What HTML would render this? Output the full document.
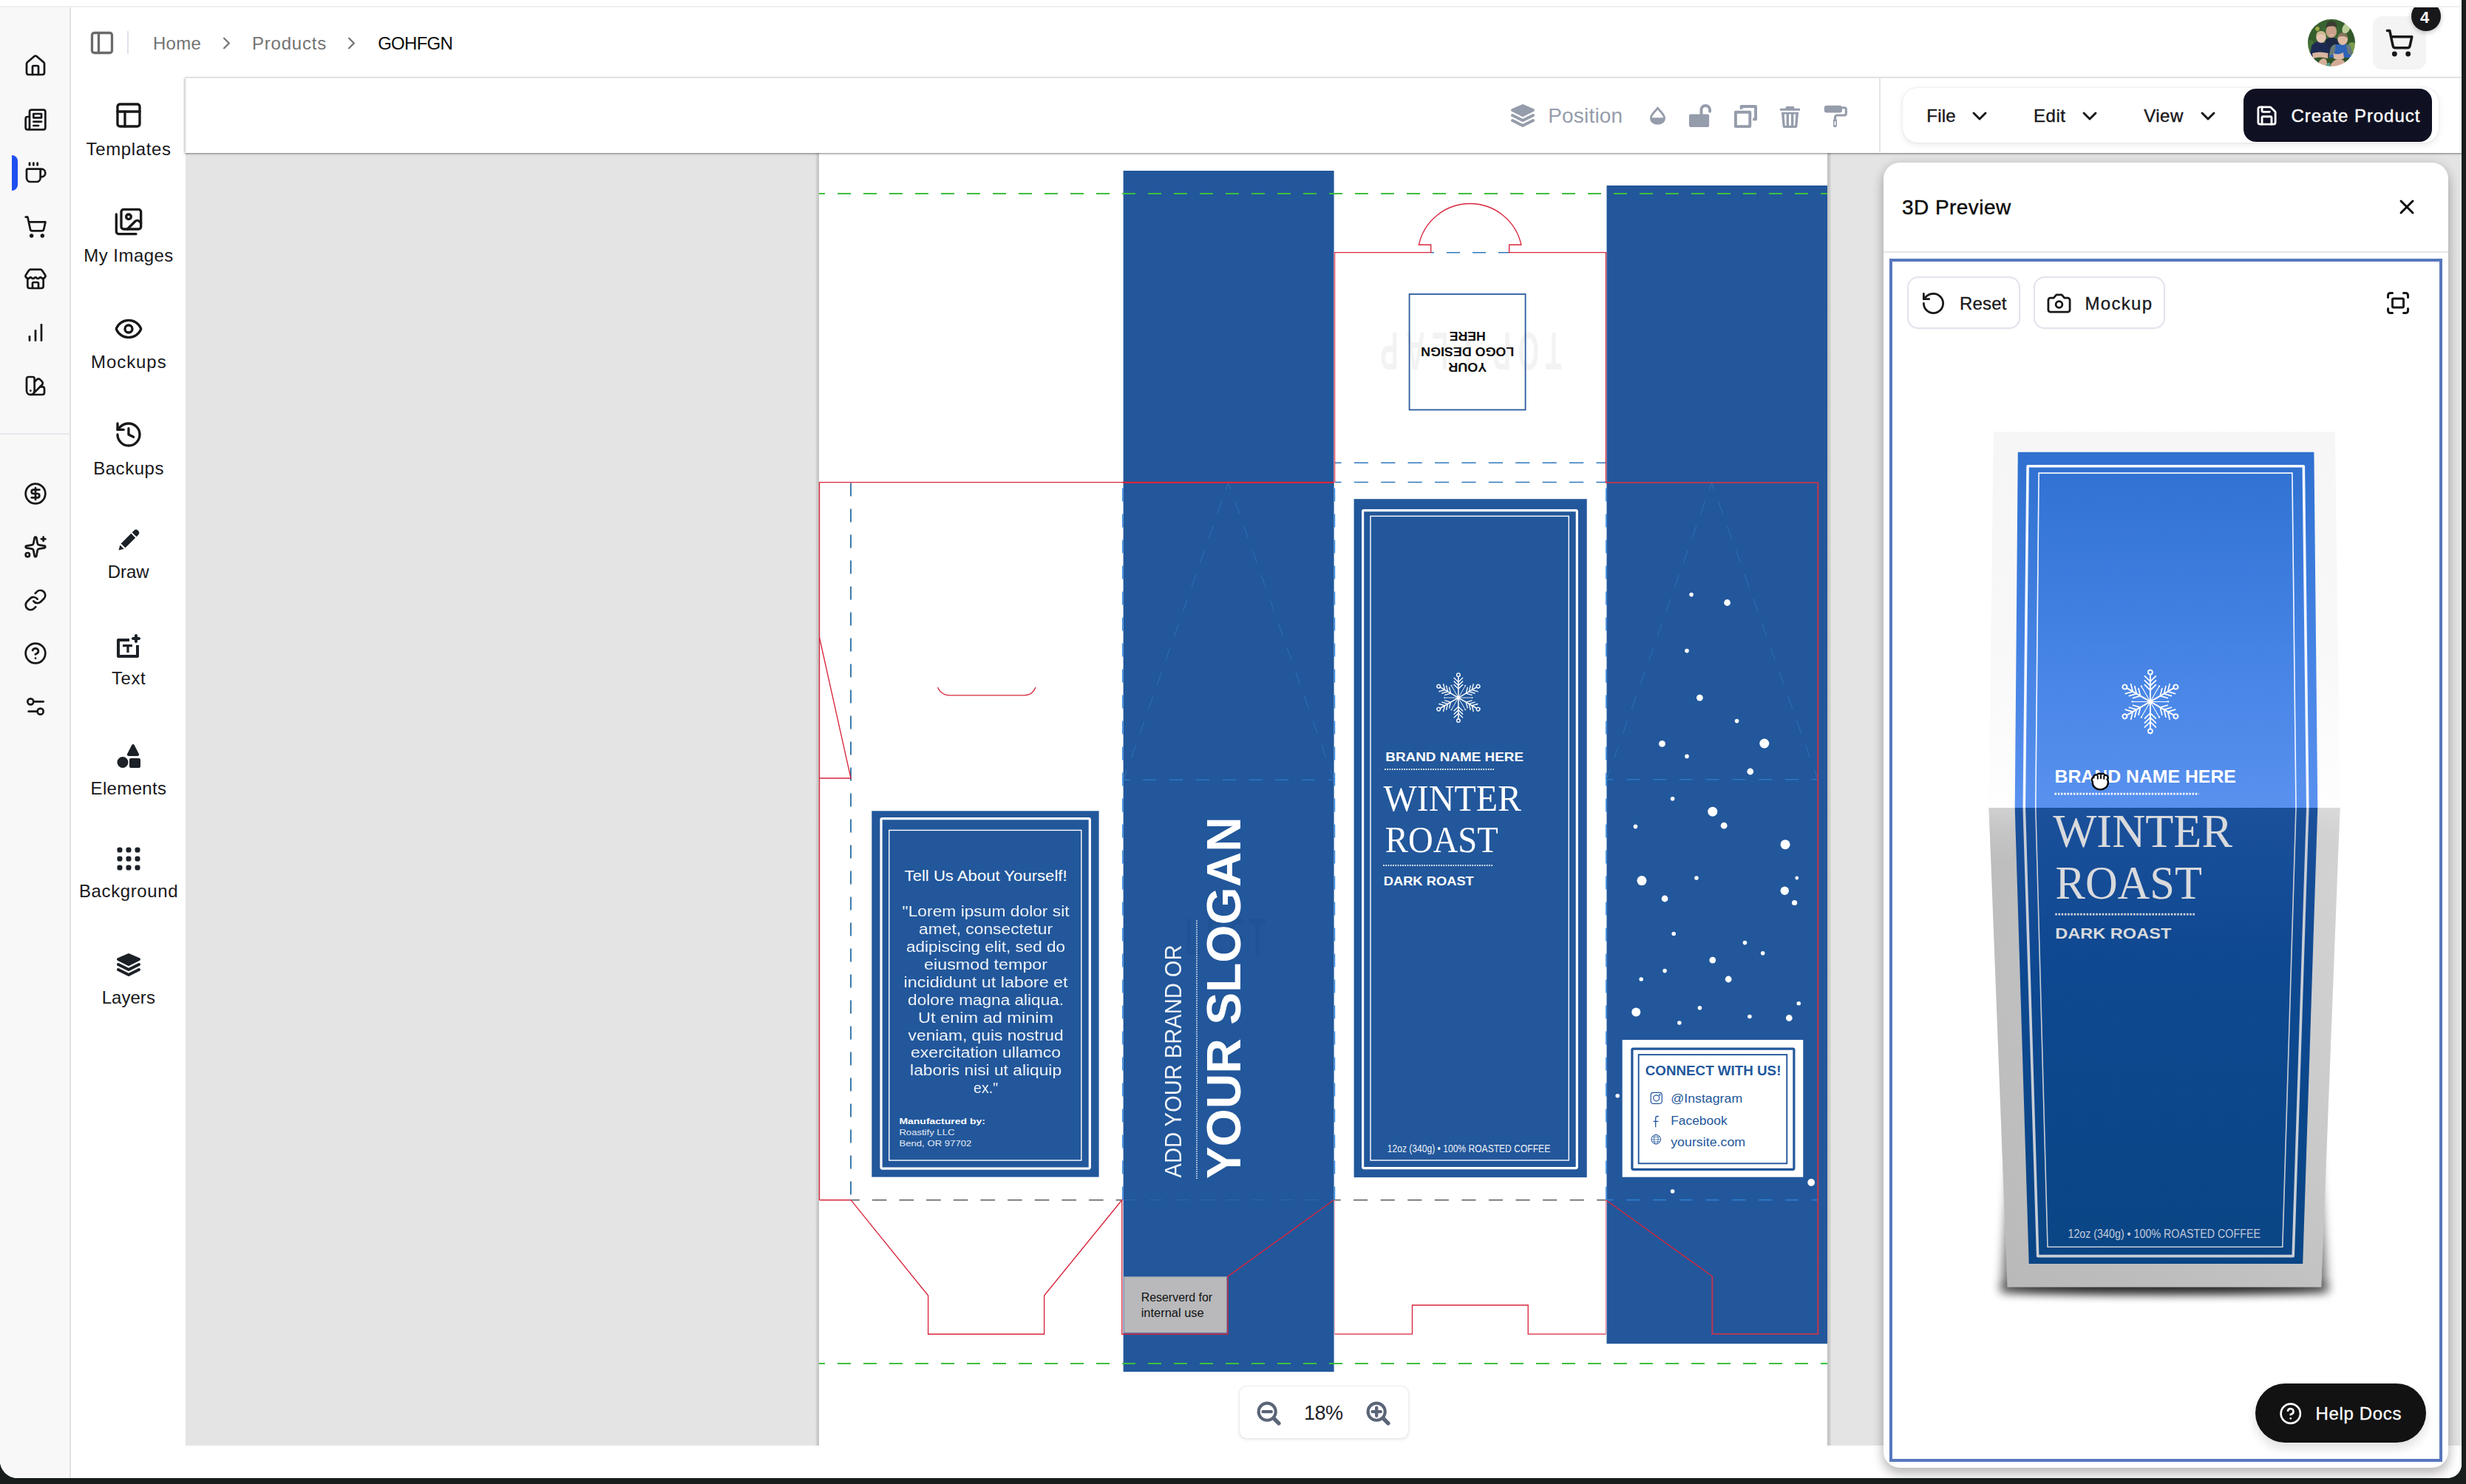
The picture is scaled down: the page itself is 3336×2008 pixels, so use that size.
<!DOCTYPE html>
<html lang="en"><head><meta charset="utf-8"><title>GOHFGN – Product Designer</title>
<style>
*{box-sizing:border-box;margin:0;padding:0}
html,body{width:3336px;height:2008px;overflow:hidden;background:#191e1d}
body{font-family:"Liberation Sans",sans-serif;color:#18181b;position:relative}
.abs,.ic,.t{position:absolute}
.ic{display:block;overflow:visible}
.t{white-space:nowrap;line-height:1}
#win{position:absolute;left:0;top:0;width:3330px;height:2000px;background:#fff;border-radius:0 0 19px 24px;overflow:hidden}
#app{position:absolute;left:0;top:10px;width:3330px;height:1990px;overflow:hidden;background:#fff}
</style></head><body>
<div id="win">
<div class="abs" style="left:0;top:8px;width:3330px;height:2px;background:#efeff0"></div>
<div id="app">

<div class="abs" style="left:0;top:0;width:96px;height:1990px;background:#f8f8f8;border-right:2px solid #e1e1e4"></div>
<svg class="ic" style="left:32.3px;top:62.9px;width:32px;height:32px" viewBox="0 0 24 24" fill="none" stroke="#18181b" stroke-width="2.05" stroke-linecap="round" stroke-linejoin="round" ><path d="M15 21v-8a1 1 0 0 0-1-1h-4a1 1 0 0 0-1 1v8"/><path d="M3 10a2 2 0 0 1 .709-1.528l7-5.999a2 2 0 0 1 2.582 0l7 5.999A2 2 0 0 1 21 10v9a2 2 0 0 1-2 2H5a2 2 0 0 1-2-2z"/></svg>
<svg class="ic" style="left:32.3px;top:135.6px;width:32px;height:32px" viewBox="0 0 24 24" fill="none" stroke="#18181b" stroke-width="2.05" stroke-linecap="round" stroke-linejoin="round" ><path d="M4 22h16a2 2 0 0 0 2-2V4a2 2 0 0 0-2-2H8a2 2 0 0 0-2 2v16a2 2 0 0 1-2 2Zm0 0a2 2 0 0 1-2-2v-9c0-1.1.9-2 2-2h2"/><path d="M18 14h-8"/><path d="M15 18h-5"/><path d="M10 6h8v4h-8V6Z"/></svg>
<svg class="ic" style="left:32.3px;top:207.6px;width:32px;height:32px" viewBox="0 0 24 24" fill="none" stroke="#18181b" stroke-width="2.05" stroke-linecap="round" stroke-linejoin="round" ><path d="M10 2v2"/><path d="M14 2v2"/><path d="M16 8a1 1 0 0 1 1 1v8a4 4 0 0 1-4 4H7a4 4 0 0 1-4-4V9a1 1 0 0 1 1-1h14a4 4 0 1 1 0 8h-1"/><path d="M6 2v2"/></svg>
<svg class="ic" style="left:32.3px;top:281.0px;width:32px;height:32px" viewBox="0 0 24 24" fill="none" stroke="#18181b" stroke-width="2.05" stroke-linecap="round" stroke-linejoin="round" ><circle cx="8" cy="21" r="1"/><circle cx="19" cy="21" r="1"/><path d="M2.05 2.05h2l2.66 12.42a2 2 0 0 0 2 1.58h9.78a2 2 0 0 0 1.95-1.57l1.65-7.43H5.12"/></svg>
<svg class="ic" style="left:32.3px;top:352.0px;width:32px;height:32px" viewBox="0 0 24 24" fill="none" stroke="#18181b" stroke-width="2.05" stroke-linecap="round" stroke-linejoin="round" ><path d="M15 21v-5a1 1 0 0 0-1-1h-4a1 1 0 0 0-1 1v5"/><path d="M17.774 10.31a1.12 1.12 0 0 0-1.549 0 2.5 2.5 0 0 1-3.451 0 1.12 1.12 0 0 0-1.548 0 2.5 2.5 0 0 1-3.452 0 1.12 1.12 0 0 0-1.549 0 2.5 2.5 0 0 1-3.77-3.248l2.889-4.184A2 2 0 0 1 7 2h10a2 2 0 0 1 1.653.873l2.895 4.192a2.5 2.5 0 0 1-3.774 3.244"/><path d="M4 10.950V19a2 2 0 0 0 2 2h12a2 2 0 0 0 2-2v-8.050"/></svg>
<svg class="ic" style="left:32.3px;top:424.0px;width:32px;height:32px" viewBox="0 0 24 24" fill="none" stroke="#18181b" stroke-width="2.05" stroke-linecap="round" stroke-linejoin="round" ><line x1="12" x2="12" y1="20" y2="10"/><line x1="18" x2="18" y1="20" y2="4"/><line x1="6" x2="6" y1="20" y2="16"/></svg>
<svg class="ic" style="left:32.3px;top:496.3px;width:32px;height:32px" viewBox="0 0 24 24" fill="none" stroke="#18181b" stroke-width="2.05" stroke-linecap="round" stroke-linejoin="round" ><path d="M11 17a4 4 0 0 1-8 0V5a2 2 0 0 1 2-2h4a2 2 0 0 1 2 2Z"/><path d="M16.7 13H19a2 2 0 0 1 2 2v4a2 2 0 0 1-2 2H7"/><path d="M 7 17h.01"/><path d="m11 8 2.3-2.3a2.4 2.4 0 0 1 3.404.004L18.6 7.6a2.4 2.4 0 0 1 .026 3.434L9.9 19.8"/></svg>
<div class="abs" style="left:16px;top:200px;width:8px;height:48px;background:#1f4ff0;border-radius:0 8px 8px 0"></div>
<div class="abs" style="left:0;top:576px;width:94px;height:2px;background:#e6e6ee"></div>
<svg class="ic" style="left:32.0px;top:641.8px;width:32px;height:32px" viewBox="0 0 24 24" fill="none" stroke="#18181b" stroke-width="2.05" stroke-linecap="round" stroke-linejoin="round" ><circle cx="12" cy="12" r="10"/><path d="M16 8h-6a2 2 0 1 0 0 4h4a2 2 0 1 1 0 4H8"/><path d="M12 18V6"/></svg>
<svg class="ic" style="left:32.0px;top:714.0px;width:32px;height:32px" viewBox="0 0 24 24" fill="none" stroke="#18181b" stroke-width="2.05" stroke-linecap="round" stroke-linejoin="round" ><path d="M11.017 2.814a1 1 0 0 1 1.966 0l1.051 5.558a2 2 0 0 0 1.594 1.594l5.558 1.051a1 1 0 0 1 0 1.966l-5.558 1.051a2 2 0 0 0-1.594 1.594l-1.051 5.558a1 1 0 0 1-1.966 0l-1.051-5.558a2 2 0 0 0-1.594-1.594l-5.558-1.051a1 1 0 0 1 0-1.966l5.558-1.051a2 2 0 0 0 1.594-1.594z"/><path d="M20 2v4"/><path d="M22 4h-4"/><circle cx="4" cy="20" r="2"/></svg>
<svg class="ic" style="left:32.0px;top:786.0px;width:32px;height:32px" viewBox="0 0 24 24" fill="none" stroke="#18181b" stroke-width="2.05" stroke-linecap="round" stroke-linejoin="round" ><path d="M10 13a5 5 0 0 0 7.54.54l3-3a5 5 0 0 0-7.07-7.07l-1.72 1.71"/><path d="M14 11a5 5 0 0 0-7.54-.54l-3 3a5 5 0 0 0 7.07 7.07l1.71-1.71"/></svg>
<svg class="ic" style="left:32.0px;top:857.8px;width:32px;height:32px" viewBox="0 0 24 24" fill="none" stroke="#18181b" stroke-width="2.05" stroke-linecap="round" stroke-linejoin="round" ><circle cx="12" cy="12" r="10"/><path d="M9.09 9a3 3 0 0 1 5.83 1c0 2-3 3-3 3"/><path d="M12 17h.01"/></svg>
<svg class="ic" style="left:32.0px;top:930.0px;width:32px;height:32px" viewBox="0 0 24 24" fill="none" stroke="#18181b" stroke-width="2.05" stroke-linecap="round" stroke-linejoin="round" ><path d="M20 7h-9"/><path d="M14 17H5"/><circle cx="17" cy="17" r="3"/><circle cx="7" cy="7" r="3"/></svg>
<div class="abs" style="left:250px;top:94px;width:3080px;height:2px;background:#e6e6e6"></div>
<svg class="ic" style="left:120.0px;top:29.7px;width:36px;height:36px" viewBox="0 0 24 24" fill="none" stroke="#6a6a6a" stroke-width="2.2" stroke-linecap="round" stroke-linejoin="round" ><rect width="18" height="18" x="3" y="3" rx="2"/><path d="M9 3v18"/></svg>
<div class="abs" style="left:172px;top:32px;width:2px;height:31px;background:#e1e1ec"></div>
<div class="t" style="left:207.00px;top:36.6px;font-size:24px;line-height:24px;color:#737373;font-weight:400;letter-spacing:0.267px;">Home</div>
<svg class="ic" style="left:293.3px;top:34.7px;width:27px;height:27px" viewBox="0 0 24 24" fill="none" stroke="#737373" stroke-width="2" stroke-linecap="round" stroke-linejoin="round" ><path d="m9 18 6-6-6-6"/></svg>
<div class="t" style="left:340.90px;top:36.6px;font-size:24px;line-height:24px;color:#737373;font-weight:400;letter-spacing:0.821px;">Products</div>
<svg class="ic" style="left:462.1px;top:34.7px;width:27px;height:27px" viewBox="0 0 24 24" fill="none" stroke="#737373" stroke-width="2" stroke-linecap="round" stroke-linejoin="round" ><path d="m9 18 6-6-6-6"/></svg>
<div class="t" style="left:511.20px;top:36.6px;font-size:24px;line-height:24px;color:#0a0a0a;font-weight:400;letter-spacing:-0.735px;">GOHFGN</div>
<svg class="ic" style="left:3122px;top:16px;width:64px;height:64px" viewBox="0 0 64 64">
<defs><clipPath id="avc"><circle cx="32" cy="32" r="32"/></clipPath>
<filter id="avb" x="-10%" y="-10%" width="120%" height="120%"><feGaussianBlur stdDeviation=".7"/></filter>
<radialGradient id="avbg" cx="45%" cy="30%" r="75%"><stop offset="0" stop-color="#3f6b34"/><stop offset="1" stop-color="#274a23"/></radialGradient></defs>
<g clip-path="url(#avc)"><g filter="url(#avb)">
<rect x="-4" y="-4" width="72" height="72" fill="url(#avbg)"/>
<ellipse cx="52" cy="12" rx="5" ry="8" fill="#d5e3ae" opacity=".85" transform="rotate(25 52 12)"/>
<ellipse cx="13" cy="13" rx="2.800" ry="3" fill="#b9b94e" opacity=".8"/>
<ellipse cx="60" cy="38" rx="6" ry="7" fill="#8cab5a" opacity=".8"/>
<ellipse cx="4" cy="36" rx="5" ry="8" fill="#4c7a3c" opacity=".7"/>
<path d="M22 44L24 28Q32 21 41 28L44 46Z" fill="#1b2844"/>
<ellipse cx="31.800" cy="16.500" rx="7.300" ry="8.800" fill="#c9a088"/>
<path d="M24 11.500Q25 2 32 2.200Q39.500 2.500 39.500 11Q32 7.500 24 11.500Z" fill="#3b3d33"/>
<path d="M28.500 20.500Q32 23.500 35.500 20.500Q32 22 28.500 20.500Z" fill="#f3e6dc"/>
<path d="M3 50L5 36Q10 29 18 31L27 34L30 50Z" fill="#1a2a52"/>
<ellipse cx="18" cy="24.300" rx="6.700" ry="7.600" fill="#e6c6b3"/>
<path d="M11.300 22Q12 15.500 18 16Q24.500 16.500 24.700 22.500Q18 18.500 11.300 22Z" fill="#cdbb93"/>
<path d="M29 52L31 40Q33 34 40 34L54 34Q58 36 59 42L60 52Z" fill="#2f63b6"/>
<path d="M29 50L30.500 40Q32.500 34.500 38 34L36 46Z" fill="#6b7a79"/><path d="M60 50L58.500 41Q57 35 52 34L54 46Z" fill="#6b7a79"/>
<ellipse cx="47.200" cy="27" rx="6.900" ry="7.900" fill="#dfbba5"/>
<path d="M40.300 25Q40.800 18 47 18.300Q53.800 18.600 54.100 25.500Q47 21 40.300 25Z" fill="#85745b"/>
<path d="M6 46Q16 43 27.500 46L27 53Q16 50 7 53Z" fill="#d9b49f"/>
<path d="M34.500 46Q41 49 48 45L49 53Q41 57 35 53Z" fill="#dbb7a6"/>
<path d="M13 64Q15 53 22 53Q27 54 26 64Z" fill="#d4ae98"/><path d="M30 64Q34 53 44 54Q52 55 50 64Z" fill="#d2ab95"/>
<path d="M24 64Q26 58 30 59L31 64Z" fill="#5a9a8a"/>
</g></g></svg>
<div class="abs" style="left:3210px;top:12px;width:72px;height:72px;border-radius:13px;background:#f4f4f5"></div>
<svg class="ic" style="left:3226.3px;top:27.5px;width:40px;height:40px" viewBox="0 0 24 24" fill="none" stroke="#18181b" stroke-width="2.1" stroke-linecap="round" stroke-linejoin="round" ><circle cx="8" cy="21" r="1"/><circle cx="19" cy="21" r="1"/><path d="M2.05 2.05h2l2.66 12.42a2 2 0 0 0 2 1.58h9.78a2 2 0 0 0 1.95-1.57l1.65-7.43H5.12"/></svg>
<div class="abs" style="left:3262px;top:-8.5px;width:40px;height:40px;border-radius:20px;background:#18181b;box-shadow:0 2px 6px rgba(0,0,0,.25)"></div>
<div class="t" style="left:3280px;top:3.3px;font-size:22px;line-height:22px;color:#fff;font-weight:700;letter-spacing:0px;transform:translateX(-50%);">4</div>
<div class="abs" style="left:98px;top:96px;width:152px;height:1894px;background:#fff"></div>
<svg class="ic" style="left:153.8px;top:125.8px;width:40px;height:40px" viewBox="0 0 24 24" fill="none" stroke="#18181b" stroke-width="2" stroke-linecap="round" stroke-linejoin="round" ><rect width="18" height="18" x="3" y="3" rx="2"/><path d="M3 9h18"/><path d="M9 21V9"/></svg>
<div class="t" style="left:116.50px;top:180.0px;font-size:24px;line-height:24px;color:#18181b;font-weight:400;letter-spacing:0.653px;">Templates</div>
<svg class="ic" style="left:153.8px;top:269.8px;width:40px;height:40px" viewBox="0 0 24 24" fill="none" stroke="#18181b" stroke-width="2" stroke-linecap="round" stroke-linejoin="round" ><path d="M18 22H4a2 2 0 0 1-2-2V6"/><path d="m22 13-1.296-1.296a2.41 2.41 0 0 0-3.408 0L11 18"/><circle cx="12" cy="8" r="2"/><rect width="16" height="16" x="6" y="2" rx="2"/></svg>
<div class="t" style="left:113.30px;top:324.0px;font-size:24px;line-height:24px;color:#18181b;font-weight:400;letter-spacing:0.453px;">My Images</div>
<svg class="ic" style="left:153.8px;top:414.7px;width:40px;height:40px" viewBox="0 0 24 24" fill="none" stroke="#18181b" stroke-width="2" stroke-linecap="round" stroke-linejoin="round" ><path d="M2.062 12.348a1 1 0 0 1 0-.696 10.75 10.75 0 0 1 19.876 0 1 1 0 0 1 0 .696 10.75 10.75 0 0 1-19.876 0"/><circle cx="12" cy="12" r="3"/></svg>
<div class="t" style="left:123.00px;top:468.0px;font-size:24px;line-height:24px;color:#18181b;font-weight:400;letter-spacing:0.933px;">Mockups</div>
<svg class="ic" style="left:153.8px;top:557.5px;width:40px;height:40px" viewBox="0 0 24 24" fill="none" stroke="#18181b" stroke-width="2" stroke-linecap="round" stroke-linejoin="round" ><path d="M3 12a9 9 0 1 0 9-9 9.75 9.75 0 0 0-6.74 2.74L3 8"/><path d="M3 3v5h5"/><path d="M12 7v5l4 2"/></svg>
<div class="t" style="left:126.20px;top:611.8px;font-size:24px;line-height:24px;color:#18181b;font-weight:400;letter-spacing:0.533px;">Backups</div>
<svg class="ic" style="left:158.8px;top:705.9px;width:30px;height:30px" viewBox="0 0 16 16" fill="#1c2127" fill-rule="evenodd"><path d="M14.9 1.1a2.2 2.2 0 0 0-3.1 0L10.5 2.4l3.1 3.1 1.3-1.300a2.200 2.200 0 0 0 0-3.100zM9.800 3.100L2.500 10.400l3.100 3.100 7.300-7.300-3.100-3.100zM1.800 11.400L.8 15.200l3.800-1-2.800-2.800z"/></svg>
<div class="t" style="left:145.85px;top:752.2px;font-size:24px;line-height:24px;color:#18181b;font-weight:400;letter-spacing:-0.075px;">Draw</div>
<svg class="ic" style="left:157.8px;top:848.0px;width:32px;height:32px" viewBox="0 0 16 16" fill="#1c2127" fill-rule="evenodd"><path d="M13 0c.55 0 1 .45 1 1v1h1c.55 0 1 .45 1 1s-.45 1-1 1h-1v1c0 .55-.45 1-1 1s-1-.45-1-1V4h-1c-.55 0-1-.45-1-1s.45-1 1-1h1V1c0-.55.45-1 1-1zM1 3h7.500v2H2v9h11V7.500h2V15c0 .55-.45 1-1 1H1c-.55 0-1-.45-1-1V4c0-.55.450-1 1-1zm3 4h6.500v1.600H8.300V12.500H6.700V8.600H4V7z"/></svg>
<div class="t" style="left:151.05px;top:896.1px;font-size:24px;line-height:24px;color:#18181b;font-weight:400;letter-spacing:0.500px;">Text</div>
<svg class="ic" style="left:157.8px;top:997.2px;width:32px;height:32px" viewBox="0 0 16 16" fill="#1c2127" fill-rule="evenodd"><path d="M10.100.600a1 1 0 0 1 1.800 0l3 5.900A1 1 0 0 1 14 8H8a1 1 0 0 1-.9-1.500l3-5.900zM4 8.500a3.750 3.750 0 1 1 0 7.500 3.750 3.750 0 0 1 0-7.500zM9.500 9.500h5.500a1 1 0 0 1 1 1V15a1 1 0 0 1-1 1H9.500a1 1 0 0 1-1-1v-4.500a1 1 0 0 1 1-1z"/></svg>
<div class="t" style="left:122.55px;top:1045.4px;font-size:24px;line-height:24px;color:#18181b;font-weight:400;letter-spacing:0.357px;">Elements</div>
<svg class="ic" style="left:157.8px;top:1136.2px;width:32px;height:32px" viewBox="0 0 16 16" fill="#1c2127" fill-rule="evenodd"><rect x="0.25" y="0.25" width="3.5" height="3.5" rx="1.4"/><rect x="6.25" y="0.25" width="3.5" height="3.5" rx="1.4"/><rect x="12.25" y="0.25" width="3.5" height="3.5" rx="1.4"/><rect x="0.25" y="6.25" width="3.5" height="3.5" rx="1.4"/><rect x="6.25" y="6.25" width="3.5" height="3.5" rx="1.4"/><rect x="12.25" y="6.25" width="3.5" height="3.5" rx="1.4"/><rect x="0.25" y="12.25" width="3.5" height="3.5" rx="1.4"/><rect x="6.25" y="12.25" width="3.5" height="3.5" rx="1.4"/><rect x="12.25" y="12.25" width="3.5" height="3.5" rx="1.4"/></svg>
<div class="t" style="left:106.90px;top:1184.2px;font-size:24px;line-height:24px;color:#18181b;font-weight:400;letter-spacing:0.631px;">Background</div>
<svg class="ic" style="left:157.8px;top:1280.4px;width:32px;height:32px" viewBox="0 0 16 16" fill="#1c2127" fill-rule="evenodd"><path d="M.55 4.89l7 3.5c.14.07.29.11.45.11s.31-.04.45-.11l7-3.5a.998.998 0 0 0-.06-1.81L8.4.08a1.006 1.006 0 0 0-.79 0l-6.99 3a.992.992 0 0 0-.07 1.81zM15 10c-.16 0-.31.04-.45.11L8 13.38l-6.55-3.27A.997.997 0 0 0 0 11c0 .39.22.72.55.89l7 3.5c.14.07.29.11.45.11s.31-.04.45-.11l7-3.5c.33-.17.55-.5.55-.89 0-.55-.45-1-1-1zm0-3.5c-.16 0-.31.04-.45.11L8 9.88 1.450 6.610A.997.997 0 0 0 0 7.500c0 .39.22.72.55.89l7 3.5c.14.07.29.11.45.11s.31-.04.45-.11l7-3.5c.33-.17.55-.5.55-.89 0-.55-.45-1-1-1z"/></svg>
<div class="t" style="left:137.75px;top:1328.4px;font-size:24px;line-height:24px;color:#18181b;font-weight:400;letter-spacing:0.020px;">Layers</div>
<div class="abs" style="left:251px;top:196px;width:3079px;height:1750px;background:#e4e4e4"></div>
<svg class="ic" style="left:251px;top:197px;width:2296px;height:1749px;overflow:hidden" viewBox="251 207 2296 1749">
<defs><linearGradient id="shl" x1="0" x2="1"><stop offset="0" stop-color="#d9d9d9"/><stop offset="1" stop-color="#bdbdbd"/></linearGradient><linearGradient id="shr" x1="0" x2="1"><stop offset="0" stop-color="#bdbdbd"/><stop offset="1" stop-color="#d9d9d9"/></linearGradient></defs>
<rect x="1103.500" y="200" width="5" height="1760" fill="url(#shl)"/><rect x="2472" y="200" width="5" height="1760" fill="url(#shr)"/>
<rect x="1108" y="200" width="1364" height="1760" fill="#fff"/>
<rect x="1519.600" y="231" width="285" height="1625.200" fill="#22579b"/>
<rect x="2173.500" y="251" width="298.500" height="1567.200" fill="#22579b"/>
<rect x="1179.300" y="1097.300" width="307.300" height="495.300" fill="#22579b"/>
<rect x="1831.600" y="675.200" width="315.100" height="917.900" fill="#22579b"/>
<text font-family="'Liberation Sans',sans-serif" font-weight="700" font-size="70" fill="#1f5293" text-anchor="middle" style="letter-spacing:14px" transform="translate(1661 1292) scale(.5 1)" x="0" y="0" opacity=".7">LEFT</text>
<path d="M1151 652.5L1151 1623.6" stroke="#2c6ea3" stroke-width="1.8" stroke-dasharray="18 17" stroke-dashoffset="-1" fill="none" opacity="1"/>
<path d="M1518.8 652.5L1518.8 1623.6" stroke="#3a8ae0" stroke-width="1.6" stroke-dasharray="18 17" stroke-dashoffset="-8" fill="none" opacity="1"/>
<path d="M1805.4 652.5L1805.4 1623.6" stroke="#3a8ae0" stroke-width="1.6" stroke-dasharray="18 17" stroke-dashoffset="-8" fill="none" opacity="1"/>
<path d="M2172.9 652.5L2172.9 1623.6" stroke="#3a8ae0" stroke-width="1.6" stroke-dasharray="18 17" stroke-dashoffset="-8" fill="none" opacity="1"/>
<path d="M1661.8 653L1520 1055" stroke="#2a6bb0" stroke-width="1.3" stroke-dasharray="18 17" stroke-dashoffset="8" fill="none" opacity="1"/>
<path d="M1661.8 653L1804.5 1055" stroke="#2a6bb0" stroke-width="1.3" stroke-dasharray="18 17" stroke-dashoffset="8" fill="none" opacity="1"/>
<path d="M2315.6 653L2173.5 1054.5" stroke="#2a6bb0" stroke-width="1.3" stroke-dasharray="18 17" stroke-dashoffset="8" fill="none" opacity="1"/>
<path d="M2315.6 653L2459 1054.5" stroke="#2a6bb0" stroke-width="1.3" stroke-dasharray="18 17" stroke-dashoffset="8" fill="none" opacity="1"/>
<path d="M1519.6 1055.3L1804.6 1055.3" stroke="#2c78c2" stroke-width="1.6" stroke-dasharray="17.900 17.900" stroke-dashoffset="9.1" fill="none" opacity="1"/>
<path d="M2173.5 1054.8L2459 1054.8" stroke="#2c78c2" stroke-width="1.6" stroke-dasharray="17.900 17.900" stroke-dashoffset="9.1" fill="none" opacity="1"/>
<path d="M1151.2 1623.7L1518 1623.7" stroke="#595c63" stroke-width="1.35" stroke-dasharray="19.600 17.050" stroke-dashoffset="8" fill="none" opacity="1"/>
<path d="M1519.6 1623.7L1805 1623.7" stroke="#2a66ab" stroke-width="1.3" stroke-dasharray="18 17" stroke-dashoffset="0" fill="none" opacity="1"/>
<path d="M1805.4 1623.7L2172.5 1623.7" stroke="#595c63" stroke-width="1.35" stroke-dasharray="19.100 17.470" stroke-dashoffset="10.87" fill="none" opacity="1"/>
<path d="M2173.5 1623.7L2459 1623.7" stroke="#2d7bd0" stroke-width="1.7" stroke-dasharray="17.900 17.900" stroke-dashoffset="9.1" fill="none" opacity="1"/>
<path d="M1805.8 626.3L2172 626.3" stroke="#2f79bd" stroke-width="1.5" stroke-dasharray="19.200 17.200" stroke-dashoffset="10.4" fill="none" opacity="1"/>
<path d="M1805.8 652.5L2172 652.5" stroke="#2f79bd" stroke-width="1.5" stroke-dasharray="19.200 17.200" stroke-dashoffset="10.4" fill="none" opacity="1"/>
<path d="M1936 341.8L2041.6 341.8" stroke="#2f79bd" stroke-width="1.5" stroke-dasharray="18 17" stroke-dashoffset="14" fill="none" opacity="1"/>
<path d="M1108.500 1623.700V652.600H1805" stroke="#d8263c" stroke-width="1.35" fill="none" stroke-linejoin="miter"/>
<path d="M1519 652.800H1804.500" stroke="#d8263c" stroke-width="2.300" fill="none"/>
<path d="M1108.500 862.500L1151 1053H1108.500" stroke="#d8263c" stroke-width="1.35" fill="none" stroke-linejoin="miter"/>
<path d="M1268.600 930Q1273 940.800 1285 940.800H1385Q1397 940.800 1401 930" stroke="#d8263c" stroke-width="1.35" fill="none" stroke-linejoin="miter"/>
<path d="M1108.500 1623.700H1151L1255.600 1753V1805.200H1412.600V1753L1517.800 1623.700V1805.200H1661V1727.100L1804.400 1623.700" stroke="#d8263c" stroke-width="1.35" fill="none" stroke-linejoin="miter"/>
<path d="M1805.300 1805.100H1910.500V1766H2067.200V1805.100H2172.500M2172.500 1623.700L2316.400 1727V1805.100H2459.500V653H2172.500V341.600H2041.600V331.200H2057.900A70.900 70.900 0 0 0 1919.400 331.200H1935.700V341.600H1805.600V652.500" stroke="#d8263c" stroke-width="1.35" fill="none" stroke-linejoin="miter"/>
<path d="M1805.500 1623.700V1805.100" stroke="#f3b3bb" stroke-width="1.1" fill="none"/><path d="M2172.400 1623.700V1805.100" stroke="#ee8f9b" stroke-width="1.3" fill="none"/>
<path d="M1805 341.600V652.500" stroke="#e58a98" stroke-width="1.2" fill="none"/>
<path d="M2316.400 1727V1805.100H2459.300V653H2173.500" stroke="#b33a57" stroke-width="2" fill="none"/>
<path d="M1108 262H2472" stroke="#3fbf3f" stroke-width="2.2" stroke-dasharray="18 17" stroke-dashoffset="10" fill="none"/>
<path d="M1108 1845H2472" stroke="#3fbf3f" stroke-width="2.2" stroke-dasharray="18 17" stroke-dashoffset="10" fill="none"/>
<text font-family="'Liberation Sans',sans-serif" font-weight="700" font-size="73" fill="#f3f3f3" text-anchor="middle" style="letter-spacing:19px" transform="translate(1985.500 449.500) rotate(180) scale(.5 1)" x="0" y="0">TOP FLAP</text>
<rect x="1906.600" y="398" width="157" height="156.500" fill="none" stroke="#2b5a9c" stroke-width="1.800"/>
<text x="0" y="0" font-size="17" fill="#0d0d0d" font-weight="700" text-anchor="middle" font-family="'Liberation Sans',sans-serif" textLength="52" lengthAdjust="spacingAndGlyphs" transform="translate(1985.200 496.4) rotate(180)" dominant-baseline="central">YOUR</text>
<text x="0" y="0" font-size="17" fill="#0d0d0d" font-weight="700" text-anchor="middle" font-family="'Liberation Sans',sans-serif" textLength="126" lengthAdjust="spacingAndGlyphs" transform="translate(1985.200 475.4) rotate(180)" dominant-baseline="central">LOGO DESIGN</text>
<text x="0" y="0" font-size="17" fill="#0d0d0d" font-weight="700" text-anchor="middle" font-family="'Liberation Sans',sans-serif" textLength="49" lengthAdjust="spacingAndGlyphs" transform="translate(1985.200 454.3) rotate(180)" dominant-baseline="central">HERE</text>
<rect x="1192" y="1107.600" width="282.300" height="473.500" fill="none" stroke="#fff" stroke-width="3.200" rx="1.500"/>
<rect x="1202.800" y="1123.400" width="260" height="446.700" fill="none" stroke="#fff" stroke-width="1.400"/>
<text x="1333.6" y="1192" font-size="19.5" fill="#fff" font-weight="400" text-anchor="middle" font-family="'Liberation Sans',sans-serif" textLength="220" lengthAdjust="spacingAndGlyphs" >Tell Us About Yourself!</text>
<text x="1333.6" y="1240.0" font-size="19.5" fill="#fff" font-weight="400" text-anchor="middle" font-family="'Liberation Sans',sans-serif" textLength="226" lengthAdjust="spacingAndGlyphs" opacity=".93">"Lorem ipsum dolor sit</text>
<text x="1333.6" y="1263.93" font-size="19.5" fill="#fff" font-weight="400" text-anchor="middle" font-family="'Liberation Sans',sans-serif" textLength="181" lengthAdjust="spacingAndGlyphs" opacity=".93">amet, consectetur</text>
<text x="1333.6" y="1287.86" font-size="19.5" fill="#fff" font-weight="400" text-anchor="middle" font-family="'Liberation Sans',sans-serif" textLength="215" lengthAdjust="spacingAndGlyphs" opacity=".93">adipiscing elit, sed do</text>
<text x="1333.6" y="1311.79" font-size="19.5" fill="#fff" font-weight="400" text-anchor="middle" font-family="'Liberation Sans',sans-serif" textLength="167" lengthAdjust="spacingAndGlyphs" opacity=".93">eiusmod tempor</text>
<text x="1333.6" y="1335.72" font-size="19.5" fill="#fff" font-weight="400" text-anchor="middle" font-family="'Liberation Sans',sans-serif" textLength="222" lengthAdjust="spacingAndGlyphs" opacity=".93">incididunt ut labore et</text>
<text x="1333.6" y="1359.65" font-size="19.5" fill="#fff" font-weight="400" text-anchor="middle" font-family="'Liberation Sans',sans-serif" textLength="211" lengthAdjust="spacingAndGlyphs" opacity=".93">dolore magna aliqua.</text>
<text x="1333.6" y="1383.58" font-size="19.5" fill="#fff" font-weight="400" text-anchor="middle" font-family="'Liberation Sans',sans-serif" textLength="183" lengthAdjust="spacingAndGlyphs" opacity=".93">Ut enim ad minim</text>
<text x="1333.6" y="1407.51" font-size="19.5" fill="#fff" font-weight="400" text-anchor="middle" font-family="'Liberation Sans',sans-serif" textLength="210" lengthAdjust="spacingAndGlyphs" opacity=".93">veniam, quis nostrud</text>
<text x="1333.6" y="1431.44" font-size="19.5" fill="#fff" font-weight="400" text-anchor="middle" font-family="'Liberation Sans',sans-serif" textLength="203" lengthAdjust="spacingAndGlyphs" opacity=".93">exercitation ullamco</text>
<text x="1333.6" y="1455.37" font-size="19.5" fill="#fff" font-weight="400" text-anchor="middle" font-family="'Liberation Sans',sans-serif" textLength="205" lengthAdjust="spacingAndGlyphs" opacity=".93">laboris nisi ut aliquip</text>
<text x="1333.6" y="1479.3" font-size="19.5" fill="#fff" font-weight="400" text-anchor="middle" font-family="'Liberation Sans',sans-serif" textLength="33" lengthAdjust="spacingAndGlyphs" opacity=".93">ex."</text>
<text x="1216.4" y="1521" font-size="11.8" fill="#fff" font-weight="700" text-anchor="start" font-family="'Liberation Sans',sans-serif" textLength="116.5" lengthAdjust="spacingAndGlyphs" >Manufactured by:</text>
<text x="1216.4" y="1535.8" font-size="11.8" fill="#e6ecf5" font-weight="400" text-anchor="start" font-family="'Liberation Sans',sans-serif" textLength="75" lengthAdjust="spacingAndGlyphs" >Roastify LLC</text>
<text x="1216.4" y="1550.9" font-size="11.8" fill="#e6ecf5" font-weight="400" text-anchor="start" font-family="'Liberation Sans',sans-serif" textLength="98" lengthAdjust="spacingAndGlyphs" >Bend, OR 97702</text>
<text x="0" y="0" font-size="32" fill="#fff" font-weight="400" text-anchor="start" font-family="'Liberation Sans',sans-serif" textLength="315" lengthAdjust="spacingAndGlyphs" transform="translate(1597.500 1593.500) rotate(-90)" opacity=".93">ADD YOUR BRAND OR</text>
<path d="M1619 1595V1245.500" stroke="#fff" stroke-width="1.500" stroke-dasharray="1.500 1.500" fill="none"/>
<text x="0" y="0" font-size="64.5" fill="#fff" font-weight="700" text-anchor="start" font-family="'Liberation Sans',sans-serif" textLength="490" lengthAdjust="spacingAndGlyphs" transform="translate(1678.300 1595.300) rotate(-90)">YOUR SLOGAN</text>
<rect x="1520.600" y="1727.600" width="138.800" height="75.600" fill="#b9b9bb" stroke="#8b93a8" stroke-width="1"/>
<text x="1543.7" y="1761" font-size="16.3" fill="#111" font-weight="400" text-anchor="start" font-family="'Liberation Sans',sans-serif" textLength="96.5" lengthAdjust="spacingAndGlyphs" >Reserverd for</text>
<text x="1543.7" y="1782.2" font-size="16.3" fill="#111" font-weight="400" text-anchor="start" font-family="'Liberation Sans',sans-serif" textLength="85" lengthAdjust="spacingAndGlyphs" >internal use</text>
<rect x="1843.600" y="690.600" width="289.700" height="890" fill="none" stroke="#fff" stroke-width="3.200" rx="1.500"/>
<rect x="1854" y="698.400" width="268.300" height="871.600" fill="none" stroke="#fff" stroke-width="1.400"/>
<g transform="translate(1972.9 944.1) scale(1.0)" stroke="#fff" fill="none" stroke-linecap="round"><g transform="rotate(0)"><path d="M0 0V-28.3" stroke-width="1.5"/><circle cx="0" cy="-30.900" r="2.300" stroke-width="1.400"/><path d="M-5.800 -17.6L0 -12.0L5.800 -17.6" stroke-width="1.350"/><path d="M-5.800 -22.2L0 -16.6L5.800 -22.2" stroke-width="1.350"/><path d="M-5.800 -26.8L0 -21.2L5.800 -26.8" stroke-width="1.350"/></g><g transform="rotate(30)"><path d="M0 0V-18.600" stroke-width=".8"/><circle cx="0" cy="-18.800" r=".9" fill="#fff" stroke="none"/></g><g transform="rotate(60)"><path d="M0 0V-28.3" stroke-width="1.5"/><circle cx="0" cy="-30.900" r="2.300" stroke-width="1.400"/><path d="M-5.800 -17.6L0 -12.0L5.800 -17.6" stroke-width="1.350"/><path d="M-5.800 -22.2L0 -16.6L5.800 -22.2" stroke-width="1.350"/><path d="M-5.800 -26.8L0 -21.2L5.800 -26.8" stroke-width="1.350"/></g><g transform="rotate(90)"><path d="M0 0V-18.600" stroke-width=".8"/><circle cx="0" cy="-18.800" r=".9" fill="#fff" stroke="none"/></g><g transform="rotate(120)"><path d="M0 0V-28.3" stroke-width="1.5"/><circle cx="0" cy="-30.900" r="2.300" stroke-width="1.400"/><path d="M-5.800 -17.6L0 -12.0L5.800 -17.6" stroke-width="1.350"/><path d="M-5.800 -22.2L0 -16.6L5.800 -22.2" stroke-width="1.350"/><path d="M-5.800 -26.8L0 -21.2L5.800 -26.8" stroke-width="1.350"/></g><g transform="rotate(150)"><path d="M0 0V-18.600" stroke-width=".8"/><circle cx="0" cy="-18.800" r=".9" fill="#fff" stroke="none"/></g><g transform="rotate(180)"><path d="M0 0V-28.3" stroke-width="1.5"/><circle cx="0" cy="-30.900" r="2.300" stroke-width="1.400"/><path d="M-5.800 -17.6L0 -12.0L5.800 -17.6" stroke-width="1.350"/><path d="M-5.800 -22.2L0 -16.6L5.800 -22.2" stroke-width="1.350"/><path d="M-5.800 -26.8L0 -21.2L5.800 -26.8" stroke-width="1.350"/></g><g transform="rotate(210)"><path d="M0 0V-18.600" stroke-width=".8"/><circle cx="0" cy="-18.800" r=".9" fill="#fff" stroke="none"/></g><g transform="rotate(240)"><path d="M0 0V-28.3" stroke-width="1.5"/><circle cx="0" cy="-30.900" r="2.300" stroke-width="1.400"/><path d="M-5.800 -17.6L0 -12.0L5.800 -17.6" stroke-width="1.350"/><path d="M-5.800 -22.2L0 -16.6L5.800 -22.2" stroke-width="1.350"/><path d="M-5.800 -26.8L0 -21.2L5.800 -26.8" stroke-width="1.350"/></g><g transform="rotate(270)"><path d="M0 0V-18.600" stroke-width=".8"/><circle cx="0" cy="-18.800" r=".9" fill="#fff" stroke="none"/></g><g transform="rotate(300)"><path d="M0 0V-28.3" stroke-width="1.5"/><circle cx="0" cy="-30.900" r="2.300" stroke-width="1.400"/><path d="M-5.800 -17.6L0 -12.0L5.800 -17.6" stroke-width="1.350"/><path d="M-5.800 -22.2L0 -16.6L5.800 -22.2" stroke-width="1.350"/><path d="M-5.800 -26.8L0 -21.2L5.800 -26.8" stroke-width="1.350"/></g><g transform="rotate(330)"><path d="M0 0V-18.600" stroke-width=".8"/><circle cx="0" cy="-18.800" r=".9" fill="#fff" stroke="none"/></g><circle r="2.200" fill="#fff" stroke="none"/></g>
<text x="1874.3" y="1030" font-size="17.4" fill="#fff" font-weight="700" text-anchor="start" font-family="'Liberation Sans',sans-serif" textLength="186.8" lengthAdjust="spacingAndGlyphs" >BRAND NAME HERE</text>
<path d="M1873.200 1040.900H2022.500" stroke="#fff" stroke-width="2" stroke-dasharray="1.600 1.650" fill="none"/>
<text x="1871.5" y="1097.4" font-size="50.5" fill="#fff" font-weight="400" text-anchor="start" font-family="'Liberation Serif',serif" textLength="186.5" lengthAdjust="spacingAndGlyphs" >WINTER</text>
<text x="1873.8" y="1152.7" font-size="50.5" fill="#fff" font-weight="400" text-anchor="start" font-family="'Liberation Serif',serif" textLength="153" lengthAdjust="spacingAndGlyphs" >ROAST</text>
<path d="M1871.200 1171H2020.200" stroke="#fff" stroke-width="2" stroke-dasharray="1.600 1.650" fill="none"/>
<text x="1871.7" y="1197.7" font-size="16.9" fill="#fff" font-weight="700" text-anchor="start" font-family="'Liberation Sans',sans-serif" textLength="122.1" lengthAdjust="spacingAndGlyphs" >DARK ROAST</text>
<text x="1987" y="1558.7" font-size="15" fill="#eef2f8" font-weight="400" text-anchor="middle" font-family="'Liberation Sans',sans-serif" textLength="220.4" lengthAdjust="spacingAndGlyphs" >12oz (340g) • 100% ROASTED COFFEE</text>
<circle cx="2288.1" cy="804.6" r="2.8" fill="#fff"/>
<circle cx="2336.6" cy="815.5" r="4.4" fill="#fff"/>
<circle cx="2282" cy="880.6" r="2.8" fill="#fff"/>
<circle cx="2299.4" cy="944.1" r="4.4" fill="#fff"/>
<circle cx="2349.6" cy="975.6" r="2.8" fill="#fff"/>
<circle cx="2248.5" cy="1006.4" r="4.4" fill="#fff"/>
<circle cx="2386.8" cy="1006" r="6.5" fill="#fff"/>
<circle cx="2282" cy="1023.4" r="2.8" fill="#fff"/>
<circle cx="2367.8" cy="1044" r="4.4" fill="#fff"/>
<circle cx="2262.6" cy="1080.8" r="2.8" fill="#fff"/>
<circle cx="2316.8" cy="1098.2" r="6.5" fill="#fff"/>
<circle cx="2332.2" cy="1117.2" r="4.4" fill="#fff"/>
<circle cx="2212.5" cy="1118.4" r="2.8" fill="#fff"/>
<circle cx="2415.1" cy="1142.7" r="6.5" fill="#fff"/>
<circle cx="2221" cy="1191.6" r="6.5" fill="#fff"/>
<circle cx="2295" cy="1188" r="2.8" fill="#fff"/>
<circle cx="2430.8" cy="1188" r="2.4" fill="#fff"/>
<circle cx="2414.3" cy="1205.3" r="5.7" fill="#fff"/>
<circle cx="2252.1" cy="1216" r="4.4" fill="#fff"/>
<circle cx="2427.6" cy="1221.5" r="3.6" fill="#fff"/>
<circle cx="2264.2" cy="1263.5" r="2.8" fill="#fff"/>
<circle cx="2360.5" cy="1275.6" r="2.8" fill="#fff"/>
<circle cx="2384.7" cy="1289.8" r="2.8" fill="#fff"/>
<circle cx="2316.8" cy="1299.1" r="4.4" fill="#fff"/>
<circle cx="2252.1" cy="1313.6" r="2.8" fill="#fff"/>
<circle cx="2220.2" cy="1325" r="2.8" fill="#fff"/>
<circle cx="2338.2" cy="1325" r="4.4" fill="#fff"/>
<circle cx="2433.3" cy="1357.7" r="2.8" fill="#fff"/>
<circle cx="2213.3" cy="1369.4" r="6" fill="#fff"/>
<circle cx="2299.4" cy="1363.8" r="2.8" fill="#fff"/>
<circle cx="2366.9" cy="1375.5" r="2.8" fill="#fff"/>
<circle cx="2420.3" cy="1377.5" r="4.4" fill="#fff"/>
<circle cx="2271.9" cy="1384" r="2.8" fill="#fff"/>
<circle cx="2188.2" cy="1482.7" r="2.8" fill="#fff"/>
<circle cx="2450.2" cy="1600" r="4.9" fill="#fff"/>
<circle cx="2262.6" cy="1612" r="2.8" fill="#fff"/>
<rect x="2194.700" y="1407" width="244.600" height="185.700" fill="#fff"/>
<rect x="2207.900" y="1419.100" width="219" height="163.200" fill="none" stroke="#22579b" stroke-width="3.200" rx="1.500"/>
<rect x="2216.700" y="1427.100" width="200.600" height="147.200" fill="none" stroke="#22579b" stroke-width="1.900"/>
<text x="2225.8" y="1454.8" font-size="18.6" fill="#22579b" font-weight="700" text-anchor="start" font-family="'Liberation Sans',sans-serif" textLength="183.6" lengthAdjust="spacingAndGlyphs" >CONNECT WITH US!</text>
<text x="2260.2" y="1491.5" font-size="15.8" fill="#22579b" font-weight="400" text-anchor="start" font-family="'Liberation Sans',sans-serif" textLength="97" lengthAdjust="spacingAndGlyphs" >@Instagram</text>
<text x="2260.2" y="1522.2" font-size="15.8" fill="#22579b" font-weight="400" text-anchor="start" font-family="'Liberation Sans',sans-serif" textLength="76.4" lengthAdjust="spacingAndGlyphs" >Facebook</text>
<text x="2260.2" y="1550.6" font-size="15.8" fill="#22579b" font-weight="400" text-anchor="start" font-family="'Liberation Sans',sans-serif" textLength="101" lengthAdjust="spacingAndGlyphs" >yoursite.com</text>
<g stroke="#22579b" fill="none" stroke-width="1.200"><rect x="2233.300" y="1478.300" width="15" height="15" rx="3.200"/><circle cx="2240.800" cy="1485.800" r="4"/><circle cx="2245.300" cy="1481.400" r=".6" fill="#22579b"/><path d="M2243.800 1510.500h-1.500a2.600 2.600 0 0 0-2.600 2.600v12.200M2236.600 1517.400h6.800" stroke-width="1.300"/><circle cx="2240.300" cy="1541.700" r="6.300" stroke-width="1"/><ellipse cx="2240.300" cy="1541.700" rx="2.800" ry="6.300" stroke-width=".8"/><path d="M2234 1541.700h12.600M2235 1538.500h10.600M2235 1544.900h10.600" stroke-width=".7"/></g>
</svg>
<div class="abs" style="left:250px;top:95px;width:3080px;height:102px;background:#fff;box-shadow:0 1px 2.5px rgba(0,0,0,.5);border-top:1px solid #ededed"></div>
<div class="abs" style="left:250px;top:95px;width:2px;height:101px;background:#e9e9e9"></div>
<div class="abs" style="left:2542px;top:96px;width:2px;height:100px;background:#e3e3e3"></div>
<svg class="ic" style="left:2043.8px;top:131.0px;width:32px;height:32px" viewBox="0 0 16 16" fill="#959cab" fill-rule="evenodd"><path d="M.55 4.89l7 3.5c.14.07.29.11.45.11s.31-.04.45-.11l7-3.5a.998.998 0 0 0-.06-1.81L8.4.08a1.006 1.006 0 0 0-.79 0l-6.99 3a.992.992 0 0 0-.07 1.81zM15 10c-.16 0-.31.04-.45.11L8 13.38l-6.55-3.27A.997.997 0 0 0 0 11c0 .39.22.72.55.89l7 3.5c.14.07.29.11.45.11s.31-.04.45-.11l7-3.5c.33-.17.55-.5.55-.89 0-.55-.45-1-1-1zm0-3.5c-.16 0-.31.04-.45.11L8 9.88 1.450 6.610A.997.997 0 0 0 0 7.500c0 .39.22.72.55.89l7 3.5c.14.07.29.11.45.11s.31-.04.45-.11l7-3.5c.33-.17.55-.5.55-.89 0-.55-.45-1-1-1z"/></svg>
<div class="t" style="left:2094.20px;top:132.5px;font-size:28px;line-height:28px;color:#959cab;font-weight:400;letter-spacing:0.196px;">Position</div>
<svg class="ic" style="left:2226.5px;top:131.5px;width:31px;height:31px" viewBox="0 0 16 16" fill="#959cab" fill-rule="evenodd"><path d="M8 1.200C6 3.600 2.600 6.600 2.600 9.100C2.600 11.900 5 13.700 8 13.700S13.400 11.900 13.400 9.100C13.400 6.600 10 3.600 8 1.200ZM8 3.300C9.500 5 11.800 7.300 12 8.900H4C4.200 7.300 6.500 5 8 3.300Z"/></svg>
<svg class="ic" style="left:2285.0px;top:130.5px;width:31px;height:31px" viewBox="0 0 16 16" fill="#959cab" fill-rule="evenodd"><path d="M11.500 0C9.300 0 7.500 1.800 7.500 4v3H1c-.55 0-1 .45-1 1v7c0 .55.45 1 1 1h12c.55 0 1-.45 1-1V8c0-.55-.45-1-1-1H9.500V4a2 2 0 1 1 4 0v1c0 .55.45 1 1 1s1-.45 1-1V4c0-2.200-1.800-4-4-4z"/></svg>
<svg class="ic" style="left:2346.3px;top:131.5px;width:31px;height:31px" viewBox="0 0 16 16" fill="#959cab" fill-rule="evenodd"><path d="M15 0H5c-.55 0-1 .45-1 1v2h2V2h8v7h-1v2h2c.55 0 1-.45 1-1V1c0-.55-.45-1-1-1zM11 4H1c-.55 0-1 .45-1 1v10c0 .55.45 1 1 1h10c.55 0 1-.45 1-1V5c0-.55-.45-1-1-1zm-1 10H2V6h8v8z"/></svg>
<svg class="ic" style="left:2405.7px;top:131.5px;width:31px;height:31px" viewBox="0 0 16 16" fill="#959cab" fill-rule="evenodd"><path d="M14.500 2.500H11V1.700C11 1.300 10.700 1 10.300 1H5.700c-.4 0-.7.3-.7.700v.800H1.500c-.3 0-.5.200-.5.500v1h14V3c0-.3-.2-.5-.5-.5zM2 5l.9 10c0 .55.45 1 1 1h8.200c.55 0 1-.45 1-1L14 5H2zm3.500 9.500h-1l-.5-8h1.500v8zm3.250 0h-1.500v-8h1.500v8zm2.750 0h-1v-8H12l-.5 8z"/></svg>
<svg class="ic" style="left:2466px;top:131px;width:33px;height:33px" viewBox="0 0 16 16" fill="none" stroke="#959cab">
<rect x=".9" y=".9" width="11.700" height="4.700" rx="1.600" fill="#959cab" stroke="none"/>
<path d="M12.400 2.300H14a1.200 1.200 0 0 1 1.200 1.200v2.600a1.200 1.200 0 0 1-1.200 1.200H9.200A1.200 1.200 0 0 0 8 8.500v1.300" stroke-width="1.500"/>
<rect x="6.800" y="9.600" width="2.400" height="5.600" rx="1.100" fill="#959cab" stroke="none"/><rect x="7.550" y="11.200" width=".9" height="2.600" rx=".45" fill="#fff" stroke="none"/></svg>
<div class="abs" style="left:2574px;top:109px;width:725px;height:74px;border-radius:20px;background:#fff;box-shadow:0 2px 8px rgba(0,0,0,.10),0 0 2px rgba(0,0,0,.10)"></div>
<div class="t" style="left:2606.30px;top:134.8px;font-size:24px;line-height:24px;color:#18181b;font-weight:400;letter-spacing:0.225px;-webkit-text-stroke:.4px #18181b;">File</div>
<svg class="ic" style="left:2661.8px;top:130.5px;width:32px;height:32px" viewBox="0 0 24 24" fill="none" stroke="#18181b" stroke-width="2.2" stroke-linecap="round" stroke-linejoin="round" ><path d="m6 9 6 6 6-6"/></svg>
<div class="t" style="left:2751.00px;top:134.8px;font-size:24px;line-height:24px;color:#18181b;font-weight:400;letter-spacing:0.542px;-webkit-text-stroke:.4px #18181b;">Edit</div>
<svg class="ic" style="left:2810.5px;top:130.5px;width:32px;height:32px" viewBox="0 0 24 24" fill="none" stroke="#18181b" stroke-width="2.2" stroke-linecap="round" stroke-linejoin="round" ><path d="m6 9 6 6 6-6"/></svg>
<div class="t" style="left:2900.20px;top:134.8px;font-size:24px;line-height:24px;color:#18181b;font-weight:400;letter-spacing:0.483px;-webkit-text-stroke:.4px #18181b;">View</div>
<svg class="ic" style="left:2971.0px;top:130.5px;width:32px;height:32px" viewBox="0 0 24 24" fill="none" stroke="#18181b" stroke-width="2.2" stroke-linecap="round" stroke-linejoin="round" ><path d="m6 9 6 6 6-6"/></svg>
<div class="abs" style="left:3035px;top:110px;width:255px;height:72px;border-radius:17px;background:#0f1123"></div>
<svg class="ic" style="left:3051.3px;top:130.9px;width:31px;height:31px" viewBox="0 0 24 24" fill="none" stroke="#fff" stroke-width="2.2" stroke-linecap="round" stroke-linejoin="round" ><path d="M15.2 3a2 2 0 0 1 1.4.6l3.8 3.8a2 2 0 0 1 .6 1.4V19a2 2 0 0 1-2 2H5a2 2 0 0 1-2-2V5a2 2 0 0 1 2-2z"/><path d="M17 21v-7a1 1 0 0 0-1-1H8a1 1 0 0 0-1 1v7"/><path d="M7 3v4a1 1 0 0 0 1 1h7"/></svg>
<div class="t" style="left:3099.60px;top:134.8px;font-size:24px;line-height:24px;color:#fff;font-weight:400;letter-spacing:0.948px;-webkit-text-stroke:.4px #fff;">Create Product</div>
<div class="abs" style="left:1677px;top:1866px;width:228px;height:70px;border-radius:9px;background:#fff;box-shadow:0 1px 5px rgba(0,0,0,.13),0 0 1px rgba(0,0,0,.2)"></div>
<svg class="ic" style="left:1700.3px;top:1885.9px;width:33px;height:33px" viewBox="0 0 20 20" fill="none" stroke="#5a6577"><circle cx="8.600" cy="8.600" r="7" stroke-width="2.500"/><path d="M13.900 13.900L18.100 18.100" stroke-width="3.300" stroke-linecap="round"/><path d="M5.200 8.600H12" stroke-width="2.600" stroke-linecap="round"/></svg>
<div class="t" style="left:1764.00px;top:1888.8px;font-size:27px;line-height:27px;color:#1c2127;font-weight:400;letter-spacing:-0.500px;">18%</div>
<svg class="ic" style="left:1848.2px;top:1885.9px;width:33px;height:33px" viewBox="0 0 20 20" fill="none" stroke="#5a6577"><circle cx="8.600" cy="8.600" r="7" stroke-width="2.500"/><path d="M13.900 13.900L18.100 18.100" stroke-width="3.300" stroke-linecap="round"/><path d="M5.200 8.600H12M8.600 5.200V12" stroke-width="2.600" stroke-linecap="round"/></svg>
<div class="abs" style="left:2548px;top:209.5px;width:764px;height:1766px;border-radius:22px;background:#fff;box-shadow:0 9px 16px rgba(0,0,0,.24),0 0 16px rgba(0,0,0,.10)"></div>
<div class="t" style="left:2573px;top:256.5px;font-size:28px;line-height:28px;color:#0a0a0a;font-weight:400;letter-spacing:0.45px;-webkit-text-stroke:.4px #0a0a0a;">3D Preview</div>
<svg class="ic" style="left:3239.8px;top:254.0px;width:32px;height:32px" viewBox="0 0 24 24" fill="none" stroke="#0a0a0a" stroke-width="2.2" stroke-linecap="round" stroke-linejoin="round" ><path d="M18 6 6 18"/><path d="m6 6 12 12"/></svg>
<div class="abs" style="left:2548px;top:329.5px;width:764px;height:2px;background:#e6e6e6"></div>
<div class="abs" style="left:2556.300px;top:340px;width:747.700px;height:1628px;border:4px solid #5877bd;background:#fff"></div>
<div class="abs" style="left:2580.2px;top:364.3px;width:152.8px;height:70.500px;border-radius:15px;background:#fff;border:2px solid #e3e3ee;box-shadow:0 1px 2px rgba(0,0,0,.04)"></div>
<div class="abs" style="left:2750.7px;top:364.3px;width:178.3px;height:70.500px;border-radius:15px;background:#fff;border:2px solid #e3e3ee;box-shadow:0 1px 2px rgba(0,0,0,.04)"></div>
<svg class="ic" style="left:2598.2px;top:382.5px;width:35px;height:35px" viewBox="0 0 24 24" fill="none" stroke="#18181b" stroke-width="1.9" stroke-linecap="round" stroke-linejoin="round" ><path d="M3 12a9 9 0 1 0 9-9 9.75 9.75 0 0 0-6.74 2.74L3 8"/><path d="M3 3v5h5"/></svg>
<div class="t" style="left:2651.00px;top:388.5px;font-size:24px;line-height:24px;color:#18181b;font-weight:400;letter-spacing:0.163px;-webkit-text-stroke:.3px #18181b;">Reset</div>
<svg class="ic" style="left:2768.1px;top:382.5px;width:35px;height:35px" viewBox="0 0 24 24" fill="none" stroke="#18181b" stroke-width="1.9" stroke-linecap="round" stroke-linejoin="round" ><path d="M14.5 4h-5L7 7H4a2 2 0 0 0-2 2v9a2 2 0 0 0 2 2h16a2 2 0 0 0 2-2V9a2 2 0 0 0-2-2h-3l-2.5-3z"/><circle cx="12" cy="13" r="3"/></svg>
<div class="t" style="left:2820.50px;top:388.5px;font-size:24px;line-height:24px;color:#18181b;font-weight:400;letter-spacing:1.300px;-webkit-text-stroke:.3px #18181b;">Mockup</div>
<svg class="ic" style="left:3225.7px;top:382.0px;width:36px;height:36px" viewBox="0 0 24 24" fill="none" stroke="#18181b" stroke-width="2" stroke-linecap="round" stroke-linejoin="round" ><path d="M3 7V5a2 2 0 0 1 2-2h2"/><path d="M17 3h2a2 2 0 0 1 2 2v2"/><path d="M21 17v2a2 2 0 0 1-2 2h-2"/><path d="M7 21H5a2 2 0 0 1-2-2v-2"/><rect width="10" height="8" x="7" y="8" rx="1"/></svg>
<svg class="ic" style="left:2600px;top:550px;width:660px;height:1260px" viewBox="2600 560 660 1260">
<defs>
<linearGradient id="gtop" x1="0" y1="0" x2="0" y2="1"><stop offset="0" stop-color="#2f70d0"/><stop offset=".5" stop-color="#4281e2"/><stop offset="1" stop-color="#5991ef"/></linearGradient>
<linearGradient id="gbot" x1="0" y1="0" x2="0" y2="1"><stop offset="0" stop-color="#1b509b"/><stop offset=".35" stop-color="#0e4890"/><stop offset="1" stop-color="#0a4585"/></linearGradient>
<linearGradient id="ggrey" x1="0" y1="0" x2="1" y2="0"><stop offset="0" stop-color="#bdbdbd"/><stop offset=".5" stop-color="#c6c6c6"/><stop offset="1" stop-color="#d2d2d2"/></linearGradient>
<linearGradient id="ggreyv" x1="0" y1="0" x2="0" y2="1"><stop offset="0" stop-color="#e0e0e0" stop-opacity=".55"/><stop offset=".12" stop-color="#c9c9c9" stop-opacity="0"/><stop offset="1" stop-color="#b4b4b4" stop-opacity=".5"/></linearGradient>
 <linearGradient id="gtopgrey" x1="0" y1="0" x2="0" y2="1"><stop offset="0" stop-color="#f6f6f6"/><stop offset=".55" stop-color="#f8f8f8"/><stop offset="1" stop-color="#fefefe"/></linearGradient>
<filter id="blur8" x="-20%" y="-200%" width="140%" height="500%"><feGaussianBlur stdDeviation="7"/></filter>
</defs>
<ellipse cx="2928" cy="1742" rx="224" ry="8" fill="#000" opacity=".8" filter="url(#blur8)"/>
<path d="M2722 1520L2707 1749H3149L3134 1520Z" fill="#000" opacity=".55" filter="url(#blur8)"/>
<path d="M2696.800 584.300H3158.800L3165.600 1093H2690.500Z" fill="url(#gtopgrey)"/>
<path d="M2729.800 611.800H3130.400L3135.300 1093H2725.700Z" fill="url(#gtop)"/>
<path d="M2690.500 1093H3165.600L3140.200 1741.400H2715.600Z" fill="url(#ggrey)"/>
<path d="M2690.500 1093H3165.600L3140.200 1741.400H2715.600Z" fill="url(#ggreyv)"/>
<path d="M2725.700 1093H3135.300L3115.200 1709.900H2744.700Z" fill="url(#gbot)"/>
<path d="M2738.300 1093L2743.100 630.800H3116.300L3121.800 1093" fill="none" stroke="#f4f8ff" stroke-width="3.600" stroke-linejoin="round"/>
<path d="M2753.800 1093L2758.100 640.100H3100.900L3106 1093" fill="none" stroke="#f4f8ff" stroke-width="1.600"/>
<path d="M2738.300 1093L2756.700 1699.600H3102.200L3121.800 1093" fill="none" stroke="#c9ced6" stroke-width="3.600" stroke-linejoin="round"/>
<path d="M2753.800 1093L2770 1687.300H3087.800L3106 1093" fill="none" stroke="#c9ced6" stroke-width="1.600"/>
<g transform="translate(2908.9 949.4) scale(1.29)" stroke="#fff" fill="none" stroke-linecap="round"><g transform="rotate(0)"><path d="M0 0V-28.3" stroke-width="1.5"/><circle cx="0" cy="-30.900" r="2.300" stroke-width="1.400"/><path d="M-5.800 -17.6L0 -12.0L5.800 -17.6" stroke-width="1.350"/><path d="M-5.800 -22.2L0 -16.6L5.800 -22.2" stroke-width="1.350"/><path d="M-5.800 -26.8L0 -21.2L5.800 -26.8" stroke-width="1.350"/></g><g transform="rotate(30)"><path d="M0 0V-18.600" stroke-width=".8"/><circle cx="0" cy="-18.800" r=".9" fill="#fff" stroke="none"/></g><g transform="rotate(60)"><path d="M0 0V-28.3" stroke-width="1.5"/><circle cx="0" cy="-30.900" r="2.300" stroke-width="1.400"/><path d="M-5.800 -17.6L0 -12.0L5.800 -17.6" stroke-width="1.350"/><path d="M-5.800 -22.2L0 -16.6L5.800 -22.2" stroke-width="1.350"/><path d="M-5.800 -26.8L0 -21.2L5.800 -26.8" stroke-width="1.350"/></g><g transform="rotate(90)"><path d="M0 0V-18.600" stroke-width=".8"/><circle cx="0" cy="-18.800" r=".9" fill="#fff" stroke="none"/></g><g transform="rotate(120)"><path d="M0 0V-28.3" stroke-width="1.5"/><circle cx="0" cy="-30.900" r="2.300" stroke-width="1.400"/><path d="M-5.800 -17.6L0 -12.0L5.800 -17.6" stroke-width="1.350"/><path d="M-5.800 -22.2L0 -16.6L5.800 -22.2" stroke-width="1.350"/><path d="M-5.800 -26.8L0 -21.2L5.800 -26.8" stroke-width="1.350"/></g><g transform="rotate(150)"><path d="M0 0V-18.600" stroke-width=".8"/><circle cx="0" cy="-18.800" r=".9" fill="#fff" stroke="none"/></g><g transform="rotate(180)"><path d="M0 0V-28.3" stroke-width="1.5"/><circle cx="0" cy="-30.900" r="2.300" stroke-width="1.400"/><path d="M-5.800 -17.6L0 -12.0L5.800 -17.6" stroke-width="1.350"/><path d="M-5.800 -22.2L0 -16.6L5.800 -22.2" stroke-width="1.350"/><path d="M-5.800 -26.8L0 -21.2L5.800 -26.8" stroke-width="1.350"/></g><g transform="rotate(210)"><path d="M0 0V-18.600" stroke-width=".8"/><circle cx="0" cy="-18.800" r=".9" fill="#fff" stroke="none"/></g><g transform="rotate(240)"><path d="M0 0V-28.3" stroke-width="1.5"/><circle cx="0" cy="-30.900" r="2.300" stroke-width="1.400"/><path d="M-5.800 -17.6L0 -12.0L5.800 -17.6" stroke-width="1.350"/><path d="M-5.800 -22.2L0 -16.6L5.800 -22.2" stroke-width="1.350"/><path d="M-5.800 -26.8L0 -21.2L5.800 -26.8" stroke-width="1.350"/></g><g transform="rotate(270)"><path d="M0 0V-18.600" stroke-width=".8"/><circle cx="0" cy="-18.800" r=".9" fill="#fff" stroke="none"/></g><g transform="rotate(300)"><path d="M0 0V-28.3" stroke-width="1.5"/><circle cx="0" cy="-30.900" r="2.300" stroke-width="1.400"/><path d="M-5.800 -17.6L0 -12.0L5.800 -17.6" stroke-width="1.350"/><path d="M-5.800 -22.2L0 -16.6L5.800 -22.2" stroke-width="1.350"/><path d="M-5.800 -26.8L0 -21.2L5.800 -26.8" stroke-width="1.350"/></g><g transform="rotate(330)"><path d="M0 0V-18.600" stroke-width=".8"/><circle cx="0" cy="-18.800" r=".9" fill="#fff" stroke="none"/></g><circle r="2.200" fill="#fff" stroke="none"/></g>
<text x="2779.5" y="1059.3" font-size="23.6" fill="#fff" font-weight="700" text-anchor="start" font-family="'Liberation Sans',sans-serif" textLength="245.4" lengthAdjust="spacingAndGlyphs" >BRAND NAME HERE</text>
<path d="M2779.500 1074.200H2974.500" stroke="#fff" stroke-width="2.800" stroke-dasharray="2.500 1.730" fill="none"/>
<text x="2777.5" y="1145.7" font-size="64" fill="#d9dadc" font-weight="400" text-anchor="start" font-family="'Liberation Serif',serif" textLength="242.5" lengthAdjust="spacingAndGlyphs" >WINTER</text>
<text x="2780.5" y="1215.7" font-size="64" fill="#d9dadc" font-weight="400" text-anchor="start" font-family="'Liberation Serif',serif" textLength="198.5" lengthAdjust="spacingAndGlyphs" >ROAST</text>
<path d="M2780.300 1237.100H2969.500" stroke="#d9dadc" stroke-width="2.800" stroke-dasharray="2.500 1.730" fill="none"/>
<text x="2780.3" y="1270.2" font-size="21" fill="#d9dadc" font-weight="700" text-anchor="start" font-family="'Liberation Sans',sans-serif" textLength="157" lengthAdjust="spacingAndGlyphs" >DARK ROAST</text>
<text x="2927.7" y="1674.6" font-size="17.2" fill="#c3cbd9" font-weight="400" text-anchor="middle" font-family="'Liberation Sans',sans-serif" textLength="260.5" lengthAdjust="spacingAndGlyphs" >12oz (340g) • 100% ROASTED COFFEE</text>
<g transform="translate(2841.300 1056.300)"><g fill="#000" stroke="#000" stroke-width="4.600" stroke-linejoin="round"><ellipse cx="0" cy="2.600" rx="9.400" ry="8.300"/><circle cx="-5.600" cy="-4.400" r="2.400"/><circle cx="-1.400" cy="-6" r="2.400"/><circle cx="2.900" cy="-5.800" r="2.400"/><circle cx="6.900" cy="-4" r="2.300"/><circle cx="-8.300" cy="-1.200" r="2.200"/></g><g fill="#fff"><ellipse cx="0" cy="2.600" rx="9.400" ry="8.300"/><circle cx="-5.600" cy="-4.400" r="2.400"/><circle cx="-1.400" cy="-6" r="2.400"/><circle cx="2.900" cy="-5.800" r="2.400"/><circle cx="6.900" cy="-4" r="2.300"/><circle cx="-8.300" cy="-1.200" r="2.200"/></g><path d="M-3.500-6.200V-2.600M.750-7V-3M5-6.200V-2.600" stroke="#000" stroke-width="1.900" stroke-linecap="round" fill="none"/></g>
</svg>
<div class="abs" style="left:3051px;top:1862px;width:231px;height:80px;border-radius:40px;background:#121212;box-shadow:0 8px 14px rgba(0,0,0,.12)"></div>
<svg class="ic" style="left:3082.9px;top:1886.5px;width:31.5px;height:31.5px" viewBox="0 0 24 24" fill="none" stroke="#fff" stroke-width="2" stroke-linecap="round" stroke-linejoin="round" ><circle cx="12" cy="12" r="10"/><path d="M9.09 9a3 3 0 0 1 5.83 1c0 2-3 3-3 3"/><path d="M12 17h.01"/></svg>
<div class="t" style="left:3132.50px;top:1891.0px;font-size:24px;line-height:24px;color:#fff;font-weight:400;letter-spacing:0.656px;-webkit-text-stroke:.3px #fff;">Help Docs</div>
</div></div></body></html>
